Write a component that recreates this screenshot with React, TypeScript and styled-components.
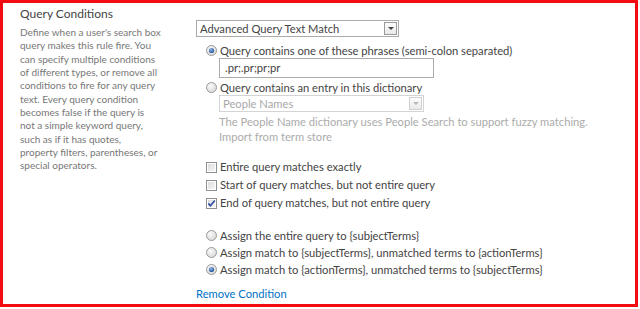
import React from 'react'
import styled, { createGlobalStyle } from 'styled-components'

const Global = createGlobalStyle`
	html, body {
		margin: 0;
		padding: 0;
		background: #fff;
	}
	body {
		font-family: Lato, 'Liberation Sans', sans-serif;
	}
`

const Frame = styled.div`
	box-sizing: border-box;
	width: 638px;
	height: 307px;
	border: 3px solid #f30b12;
	display: flex;
	padding: 2px 0 0 17px;
`

const Side = styled.div`
	flex-shrink: 0;
	width: 150px;
	margin-right: 26px;
`

const Title = styled.div`
	font-size: 12px;
	line-height: 17px;
	color: #444;
	margin-bottom: 4px;
`

const Desc = styled.div`
	font-size: 10px;
	line-height: 13.35px;
	color: #777;
	white-space: nowrap;
`

const Main = styled.div`
	display: flex;
	flex-direction: column;
	padding-top: 15px;
`

const Select = styled.div<{ $width: number; $disabled?: boolean }>`
	box-sizing: border-box;
	width: ${p => p.$width}px;
	height: 17px;
	border: 1px solid ${p => (p.$disabled ? '#d4d4d4' : '#ababab')};
	display: flex;
	align-items: center;
	justify-content: space-between;
	font-size: 11.2px;
	color: ${p => (p.$disabled ? '#a8a8a8' : '#444')};
	padding-left: 3px;
	background: #fff;
`

const Arrow = styled.div<{ $disabled?: boolean }>`
	width: 13px;
	height: 13px;
	margin-right: 1px;
	box-sizing: border-box;
	border: 1px solid ${p => (p.$disabled ? '#d0d0d0' : '#9a9a9a')};
	background: linear-gradient(#fdfdfd, #e9e9e9);
	display: flex;
	align-items: center;
	justify-content: center;
	&::after {
		content: '';
		border-left: 3px solid transparent;
		border-right: 3px solid transparent;
		border-top: 3px solid ${p => (p.$disabled ? '#b8b8b8' : '#444')};
	}
`

const Options = styled.div`
	padding-left: 10px;
	display: flex;
	flex-direction: column;
`

const Group = styled.div<{ $line: number; $top: number }>`
	display: flex;
	flex-direction: column;
	margin-top: ${p => p.$top}px;
	line-height: ${p => p.$line}px;
`

const Row = styled.label`
	display: flex;
	align-items: center;
	gap: 3px;
	font-size: 11.2px;
	color: #444;
	white-space: nowrap;
`

const Nested = styled.div`
	padding-left: 13px;
	display: flex;
	flex-direction: column;
`

const TextBox = styled.div`
	box-sizing: border-box;
	width: 215px;
	height: 20px;
	border: 1px solid #ababab;
	font-size: 11.2px;
	line-height: 17px;
	color: #444;
	padding: 0 0 0 5px;
	margin-bottom: 2px;
`

const Hint = styled.div`
	font-size: 11.2px;
	line-height: 15px;
	color: #ababab;
	margin-top: 2px;
	white-space: nowrap;
`

const Link = styled.a`
	font-size: 11.2px;
	line-height: 17px;
	color: #0072c6;
	text-decoration: none;
	margin-top: 7px;
`

const Radio = ({ on }: { on?: boolean }) => (
	<svg width="11" height="11" viewBox="0 0 11 11">
		<defs>
			<radialGradient id="rg" cx="40%" cy="35%" r="70%">
				<stop offset="0" stopColor="#fbfbfb" />
				<stop offset="1" stopColor="#d6d6d6" />
			</radialGradient>
			<radialGradient id="rd" cx="40%" cy="35%" r="70%">
				<stop offset="0" stopColor="#8db5e8" />
				<stop offset="1" stopColor="#1f4f96" />
			</radialGradient>
		</defs>
		<circle cx="5.5" cy="5.5" r="5" fill="url(#rg)" stroke="#9a9a9a" />
		{on && <circle cx="5.5" cy="5.5" r="2.6" fill="url(#rd)" />}
	</svg>
)

const Check = ({ on }: { on?: boolean }) => (
	<svg width="11" height="11" viewBox="0 0 11 11">
		<defs>
			<linearGradient id="cg" x1="0" y1="0" x2="1" y2="1">
				<stop offset="0" stopColor="#dcdcdc" />
				<stop offset="1" stopColor="#f6f6f6" />
			</linearGradient>
		</defs>
		<rect x="0.5" y="0.5" width="10" height="10" fill="#fff" stroke="#8f8f8f" />
		<rect x="2" y="2" width="7" height="7" fill="url(#cg)" />
		{on && <path d="M2.3 5.4 L4.4 7.8 L8.8 2.4" fill="none" stroke="#2c4fa0" strokeWidth="1.6" />}
	</svg>
)

const descLines = [
	"Define when a user's search box",
	'query makes this rule fire. You',
	'can specify multiple conditions',
	'of different types, or remove all',
	'conditions to fire for any query',
	'text. Every query condition',
	'becomes false if the query is',
	'not a simple keyword query,',
	'such as if it has quotes,',
	'property filters, parentheses, or',
	'special operators.',
]

const App = () => (
	<>
		<Global />
		<Frame>
			<Side>
				<Title>Query Conditions</Title>
				<Desc>
					{descLines.map(l => (
						<div key={l}>{l}</div>
					))}
				</Desc>
			</Side>
			<Main>
				<Select $width={203}>
					Advanced Query Text Match
					<Arrow />
				</Select>
				<Options>
					<Group $line={15} $top={6}>
						<Row>
							<Radio on />
							Query contains one of these phrases (semi-colon separated)
						</Row>
						<Nested>
							<TextBox>.pr;.pr;pr;pr</TextBox>
						</Nested>
						<Row>
							<Radio />
							Query contains an entry in this dictionary
						</Row>
						<Nested>
							<Select $width={205} $disabled>
								People Names
								<Arrow $disabled />
							</Select>
							<Hint>
								The People Name dictionary uses People Search to support fuzzy matching.
								<br />
								Import from term store
							</Hint>
						</Nested>
					</Group>
					<Group $line={18} $top={14}>
						<Row>
							<Check />
							Entire query matches exactly
						</Row>
						<Row>
							<Check />
							Start of query matches, but not entire query
						</Row>
						<Row>
							<Check on />
							End of query matches, but not entire query
						</Row>
					</Group>
					<Group $line={17} $top={15}>
						<Row>
							<Radio />
							Assign the entire query to {'{subjectTerms}'}
						</Row>
						<Row>
							<Radio />
							Assign match to {'{subjectTerms}'}, unmatched terms to {'{actionTerms}'}
						</Row>
						<Row>
							<Radio on />
							Assign match to {'{actionTerms}'}, unmatched terms to {'{subjectTerms}'}
						</Row>
					</Group>
				</Options>
				<Link href="#">Remove Condition</Link>
			</Main>
		</Frame>
	</>
)

export default App
